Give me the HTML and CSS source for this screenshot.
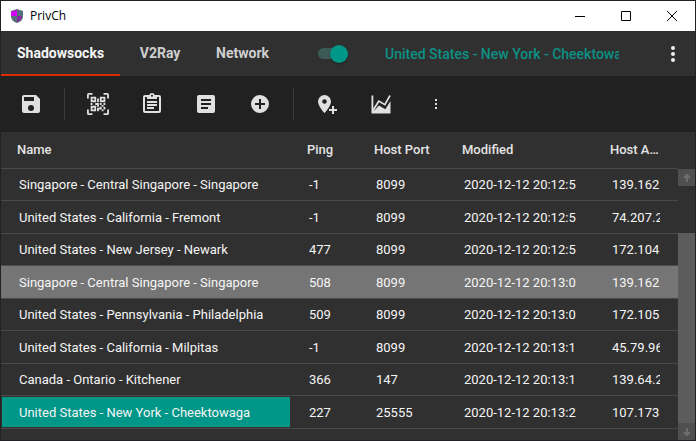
FILE: index.html
```
<!DOCTYPE html>
<html lang="en">
<head>
<meta charset="utf-8">
<title>PrivCh</title>
<link rel="stylesheet" href="styles.css">
</head>
<body>
<header class="titlebar">
  <svg class="logo" viewBox="0 0 12 14" aria-hidden="true">
    <path fill="#546e7a" d="M6 0 12 2v5c0 3.500-2.500 6-6 7-3.500-1-6-3.500-6-7V2z"/>
    <path fill="#d500f9" d="M6 1v6H0V3z"/>
    <path fill="#8e24aa" d="M6 7h5c0 2.500-2 4.500-5 6z"/>
  </svg>
  <h1 class="app-name">PrivCh</h1>
  <button class="win-btn" aria-label="Minimize"><svg viewBox="0 0 10 10"><path d="M0 5.500h10"/></svg></button>
  <button class="win-btn" aria-label="Maximize"><svg viewBox="0 0 10 10"><path d="M.5.500h9v9h-9z"/></svg></button>
  <button class="win-btn" aria-label="Close"><svg viewBox="0 0 10 10"><path d="m0 0 10 10M10 0 0 10"/></svg></button>
</header>

<nav class="tabs">
  <button class="tab tab-active">Shadowsocks</button>
  <button class="tab">V2Ray</button>
  <button class="tab">Network</button>
  <input class="switch" type="checkbox" role="switch" aria-label="Connection" checked>
  <span class="current">United States - New York - Cheektowaga</span>
  <button class="menu" aria-label="Menu"><svg viewBox="0 0 24 24"><circle cx="12" cy="6" r="2"/><circle cx="12" cy="12" r="2"/><circle cx="12" cy="18" r="2"/></svg></button>
</nav>

<div class="toolbar" role="toolbar">
  <button class="tool" aria-label="Save"><svg viewBox="0 0 24 24"><path d="M15 9H5V5h10M12 19a3 3 0 1 1 0-6 3 3 0 0 1 0 6m5-16H5a2 2 0 0 0-2 2v14a2 2 0 0 0 2 2h14a2 2 0 0 0 2-2V7z"/></svg></button>
  <span class="divider"></span>
  <button class="tool" aria-label="Scan QR code"><svg class="qr" viewBox="0 0 24 24"><path d="M4,4H10V10H4V4M20,4V10H14V4H20M14,15H16V13H14V11H16V13H18V11H20V13H18V15H20V18H18V20H16V18H13V20H11V16H14V15M16,15V18H18V15H16M4,20V14H10V20H4M6,6V8H8V6H6M16,6V8H18V6H16M6,16V18H8V16H6M4,11H6V13H4V11M9,11H13V15H11V13H9V11M11,6H13V10H11V6M2,2V6H0V2A2,2 0 0,1 2,0H6V2H2M22,0A2,2 0 0,1 24,2V6H22V2H18V0H22M2,18V22H6V24H2A2,2 0 0,1 0,22V18H2M22,22V18H24V22A2,2 0 0,1 22,24H18V22H22Z"/></svg></button>
  <button class="tool" aria-label="Paste"><svg viewBox="0 0 24 24"><path fill-rule="evenodd" d="M5 3h4.200a3 3 0 0 1 5.600 0H19a2 2 0 0 1 2 2v14a2 2 0 0 1-2 2H5a2 2 0 0 1-2-2V5a2 2 0 0 1 2-2zm0 2v14h14V5h-2v2H7V5zm7-2.200a1 1 0 1 0 0 2 1 1 0 0 0 0-2zM7 9h10v2H7zm0 3h10v2H7zm0 3h7v2H7z"/></svg></button>
  <button class="tool" aria-label="Import text"><svg viewBox="0 0 24 24"><path fill-rule="evenodd" d="M5 3h14a2 2 0 0 1 2 2v14a2 2 0 0 1-2 2H5a2 2 0 0 1-2-2V5a2 2 0 0 1 2-2zm2 4v2h10V7zm0 4v2h10v-2zm0 4v2h7v-2z"/></svg></button>
  <button class="tool" aria-label="Add server"><svg viewBox="0 0 24 24"><path fill-rule="evenodd" d="M12 3a9 9 0 1 0 0 18 9 9 0 0 0 0-18zm-1 4h2v4h4v2h-4v4h-2v-4H7v-2h4z"/></svg></button>
  <span class="divider"></span>
  <button class="tool" aria-label="Add location"><svg viewBox="0 0 24 24"><path fill-rule="evenodd" d="M9.500 3A6.500 6.500 0 0 0 3 9.500C3 14.300 9.500 21 9.500 21S16 14.300 16 9.500A6.500 6.500 0 0 0 9.500 3zm0 4.200a2.300 2.300 0 1 1 0 4.600 2.300 2.300 0 0 1 0-4.600z"/><path d="M17 14h2v3h3v2h-3v3h-2v-3h-3v-2h3z"/></svg></button>
  <button class="tool" aria-label="Statistics"><svg viewBox="0 0 24 24"><path d="M2.500 3.500h1.800v12.700L9.500 8l6 3.500L20.300 3l1.400 1-5.500 9.700-6.100-3.500-5.500 9L9.900 13.500l6.500 3.800L21.500 9v12.500h-19z"/></svg></button>
  <button class="tool" aria-label="More"><svg class="dots" viewBox="0 0 12 12"><path d="M6 1h2v2H6zm0 4h2v2H6zm0 4h2v2H6z"/></svg></button>
</div>

<main class="content">
  <table class="servers">
    <colgroup><col class="c-name"><col class="c-ping"><col class="c-port"><col class="c-date"><col></colgroup>
    <thead><tr><th>Name</th><th>Ping</th><th>Host Port</th><th>Modified</th><th>Host Address</th></tr></thead>
    <tbody>
      <tr><td><div>Singapore - Central Singapore - Singapore</div></td><td>-1</td><td>8099</td><td><div>2020-12-12 20:12:5</div></td><td><div>139.162</div></td></tr>
      <tr><td><div>United States - California - Fremont</div></td><td>-1</td><td>8099</td><td><div>2020-12-12 20:12:5</div></td><td><div>74.207.2</div></td></tr>
      <tr><td><div>United States - New Jersey - Newark</div></td><td>477</td><td>8099</td><td><div>2020-12-12 20:12:5</div></td><td><div>172.104</div></td></tr>
      <tr class="hovered"><td><div>Singapore - Central Singapore - Singapore</div></td><td>508</td><td>8099</td><td><div>2020-12-12 20:13:0</div></td><td><div>139.162</div></td></tr>
      <tr><td><div>United States - Pennsylvania - Philadelphia</div></td><td>509</td><td>8099</td><td><div>2020-12-12 20:13:0</div></td><td><div>172.105</div></td></tr>
      <tr><td><div>United States - California - Milpitas</div></td><td>-1</td><td>8099</td><td><div>2020-12-12 20:13:1</div></td><td><div>45.79.96</div></td></tr>
      <tr><td><div>Canada - Ontario - Kitchener</div></td><td>366</td><td>147</td><td><div>2020-12-12 20:13:1</div></td><td><div>139.64.2</div></td></tr>
      <tr><td class="active"><div>United States - New York - Cheektowaga</div></td><td>227</td><td>25555</td><td><div>2020-12-12 20:13:2</div></td><td><div>107.173</div></td></tr>
    </tbody>
  </table>
  <div class="scrollbar">
    <button class="arrow" aria-label="Scroll up"><svg viewBox="0 0 10 10"><path d="M5 9V2M2 5l3-3 3 3"/></svg></button>
    <span class="track"></span>
    <span class="thumb"></span>
    <button class="arrow" aria-label="Scroll down"><svg viewBox="0 0 10 10"><path d="M5 1v7M2 5l3 3 3-3"/></svg></button>
  </div>
</main>
</body>
</html>
```
FILE: styles.css
```
* {
  box-sizing: border-box;
}

body {
  margin: 0;
  height: 100vh;
  display: flex;
  flex-direction: column;
  border: 1px solid #222226;
  background: #303030;
  color: #f5f5f5;
  font: 400 13px/16px Roboto, sans-serif;
  overflow: hidden;
}

button {
  border: 0;
  padding: 0;
  background: none;
  color: inherit;
  font: inherit;
}

svg {
  display: block;
}

/* Window title bar */
.titlebar {
  flex: none;
  display: flex;
  align-items: center;
  height: 30px;
  padding-left: 10px;
  background: #ffffff;
  color: #000000;
}

.logo {
  width: 12px;
  height: 14px;
}

.app-name {
  flex: 1;
  margin: 0 0 0 7px;
  font: 400 12px/16px "Open Sans", sans-serif;
}

.win-btn {
  display: grid;
  place-items: center;
  width: 46px;
  height: 30px;
}

.win-btn svg {
  width: 10px;
  height: 10px;
  fill: none;
  stroke: #000000;
}

/* Tabs */
.tabs {
  flex: none;
  display: flex;
  align-items: center;
  height: 45px;
}

.tab {
  align-self: stretch;
  min-width: 80px;
  padding: 0 16px;
  border-bottom: 2px solid transparent;
  color: #cfcfcf;
  font-size: 14px;
  font-weight: 700;
}

.tab-active {
  border-color: #dd2c00;
  color: #f5f5f5;
}

.switch {
  appearance: none;
  flex: none;
  display: flex;
  align-items: center;
  justify-content: flex-end;
  width: 26px;
  height: 11px;
  margin: 0 41px 0 33px;
  border-radius: 6px;
  background: #3c5b57;
}

.switch::before {
  content: "";
  flex: none;
  width: 18px;
  height: 18px;
  margin-right: -4px;
  border-radius: 50%;
  background: #009688;
  box-shadow: 0 1px 2px #00000066;
}

.current {
  width: 234px;
  color: #0c9184;
  font-size: 14px;
  font-weight: 500;
  white-space: nowrap;
  overflow: hidden;
}

.menu {
  margin: 0 10px 0 auto;
}

.menu svg {
  width: 24px;
  height: 24px;
  fill: #eeeeee;
}

/* Toolbar */
.toolbar {
  flex: none;
  display: flex;
  align-items: center;
  height: 56px;
  padding-left: 3px;
  background: #212121;
}

.tool {
  display: grid;
  place-items: center;
  width: 54px;
  height: 48px;
}

.tool svg {
  width: 24px;
  height: 24px;
  fill: #e0e0e0;
}

.tool .qr {
  width: 22px;
  height: 22px;
}

.tool .dots {
  width: 12px;
  height: 12px;
}

.divider {
  width: 1px;
  height: 32px;
  margin: 0 6px;
  background: #3c3c3c;
}

/* Server list */
.content {
  flex: 1;
  display: flex;
  align-items: flex-start;
  min-height: 0;
}

.servers {
  flex: 1;
  width: 0;
  table-layout: fixed;
  border-collapse: separate;
  border-spacing: 0;
}

.c-name {
  width: 290px;
}

.c-ping {
  width: 67px;
}

.c-port {
  width: 88px;
}

.c-date {
  width: 148px;
}

th,
td {
  border-bottom: 1px solid #4a4a4a;
  text-align: left;
  white-space: nowrap;
}

th {
  height: 37px;
  padding: 0 14px 0 16px;
  color: #e4e4e4;
  font-weight: 500;
  overflow: hidden;
  text-overflow: ellipsis;
}

td {
  height: 32px;
  padding: 0 18px;
}

tr:nth-child(even) td {
  height: 33px;
  padding-top: 1px;
}

td div {
  overflow: hidden;
}

.hovered td {
  background: #757575;
}

.active {
  background: #009688;
  box-shadow: inset 0 0 0 1px #303030;
}

/* Scrollbar */
.scrollbar {
  flex: none;
  align-self: stretch;
  display: flex;
  flex-direction: column;
  width: 17px;
  padding-top: 37px;
}

.arrow {
  flex: none;
  display: grid;
  place-items: center;
  height: 17px;
  background: #4f4f4f;
}

.arrow svg {
  width: 10px;
  height: 10px;
  fill: none;
  stroke: #6e6e6e;
  stroke-width: 2;
}

.track {
  flex: 1;
}

.thumb {
  flex: 4;
  background: #5c5c5c;
}
```
